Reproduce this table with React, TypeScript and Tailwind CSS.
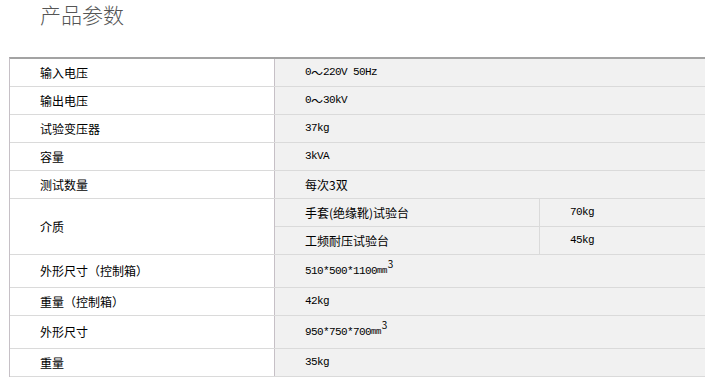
import React from "react";

const cjk = "font-['Noto_Sans_CJK_SC','Noto_Sans',sans-serif]";
const mono = "font-['Liberation_Mono','Noto_Sans_CJK_SC',monospace]";

function Label({ children }: { children: React.ReactNode }) {
  return (
    <div className={`w-[265px] shrink-0 border-r border-[#c6c0c6] pl-[30px] flex items-center text-[12px] text-black ${cjk}`}>
      {children}
    </div>
  );
}

function Mono({ children }: { children: React.ReactNode }) {
  return <span className={`${mono} text-[11px] tracking-[-0.6px] text-black`}>{children}</span>;
}

function Row({ h, label, children }: { h: string; label: string; children: React.ReactNode }) {
  return (
    <div className={`flex ${h} border-b border-[#dadada]`}>
      <Label>{label}</Label>
      <div className="flex-1 bg-[#f1f1f1] pl-[30px] flex items-center">{children}</div>
    </div>
  );
}

function Tilde() {
  return <span className={`${cjk} text-[12px]`}>～</span>;
}

function Vol({ a, b }: { a: string; b: string }) {
  return (
    <span className="flex items-start">
      <Mono>{a}</Mono>
      <span className={`${mono} text-[9px] tracking-[-0.5px] mt-[2px]`}>mm</span>
      <span className={`${cjk} text-[10px] leading-[10px] -mt-[4px] ml-[1px]`}>{b}</span>
    </span>
  );
}

export default function App() {
  return (
    <div className="w-[705px] h-[389px] overflow-hidden bg-white">
      <div className={`h-[57px] pl-[40px] pt-[4px] text-[21px] leading-[21px] text-[#555] font-light ${cjk}`}>
        产品参数
      </div>
      <div className="ml-[9px] w-[720px] border-t-2 border-t-[#a3a3a3] border-l border-l-[#c6c0c6]">
        <Row h="h-[28px]" label="输入电压">
          <span className="flex items-center"><Mono>0</Mono><Tilde /><Mono>220V 50Hz</Mono></span>
        </Row>
        <Row h="h-[28px]" label="输出电压">
          <span className="flex items-center"><Mono>0</Mono><Tilde /><Mono>30kV</Mono></span>
        </Row>
        <Row h="h-[28px]" label="试验变压器">
          <Mono>37kg</Mono>
        </Row>
        <Row h="h-[28px]" label="容量">
          <Mono>3kVA</Mono>
        </Row>
        <Row h="h-[28px]" label="测试数量">
          <span className={`${cjk} text-[12px] text-black`}>每次3双</span>
        </Row>
        <div className="flex h-[56px] border-b border-[#dadada]">
          <Label>介质</Label>
          <div className="flex-1 bg-[#f1f1f1] flex flex-col">
            <div className="flex h-[28px] border-b border-[#dadada]">
              <div className={`w-[265px] border-r border-[#dadada] pl-[30px] flex items-center text-[12px] text-black ${cjk}`}>
                手套(绝缘靴)试验台
              </div>
              <div className="flex-1 pl-[30px] flex items-center"><Mono>70kg</Mono></div>
            </div>
            <div className="flex h-[27px]">
              <div className={`w-[265px] border-r border-[#dadada] pl-[30px] flex items-center text-[12px] text-black ${cjk}`}>
                工频耐压试验台
              </div>
              <div className="flex-1 pl-[30px] flex items-center"><Mono>45kg</Mono></div>
            </div>
          </div>
        </div>
        <Row h="h-[33px]" label="外形尺寸（控制箱）">
          <Vol a="510*500*1100" b="3" />
        </Row>
        <Row h="h-[28px]" label="重量（控制箱）">
          <Mono>42kg</Mono>
        </Row>
        <Row h="h-[33px]" label="外形尺寸">
          <Vol a="950*750*700" b="3" />
        </Row>
        <Row h="h-[28px]" label="重量">
          <Mono>35kg</Mono>
        </Row>
      </div>
    </div>
  );
}
